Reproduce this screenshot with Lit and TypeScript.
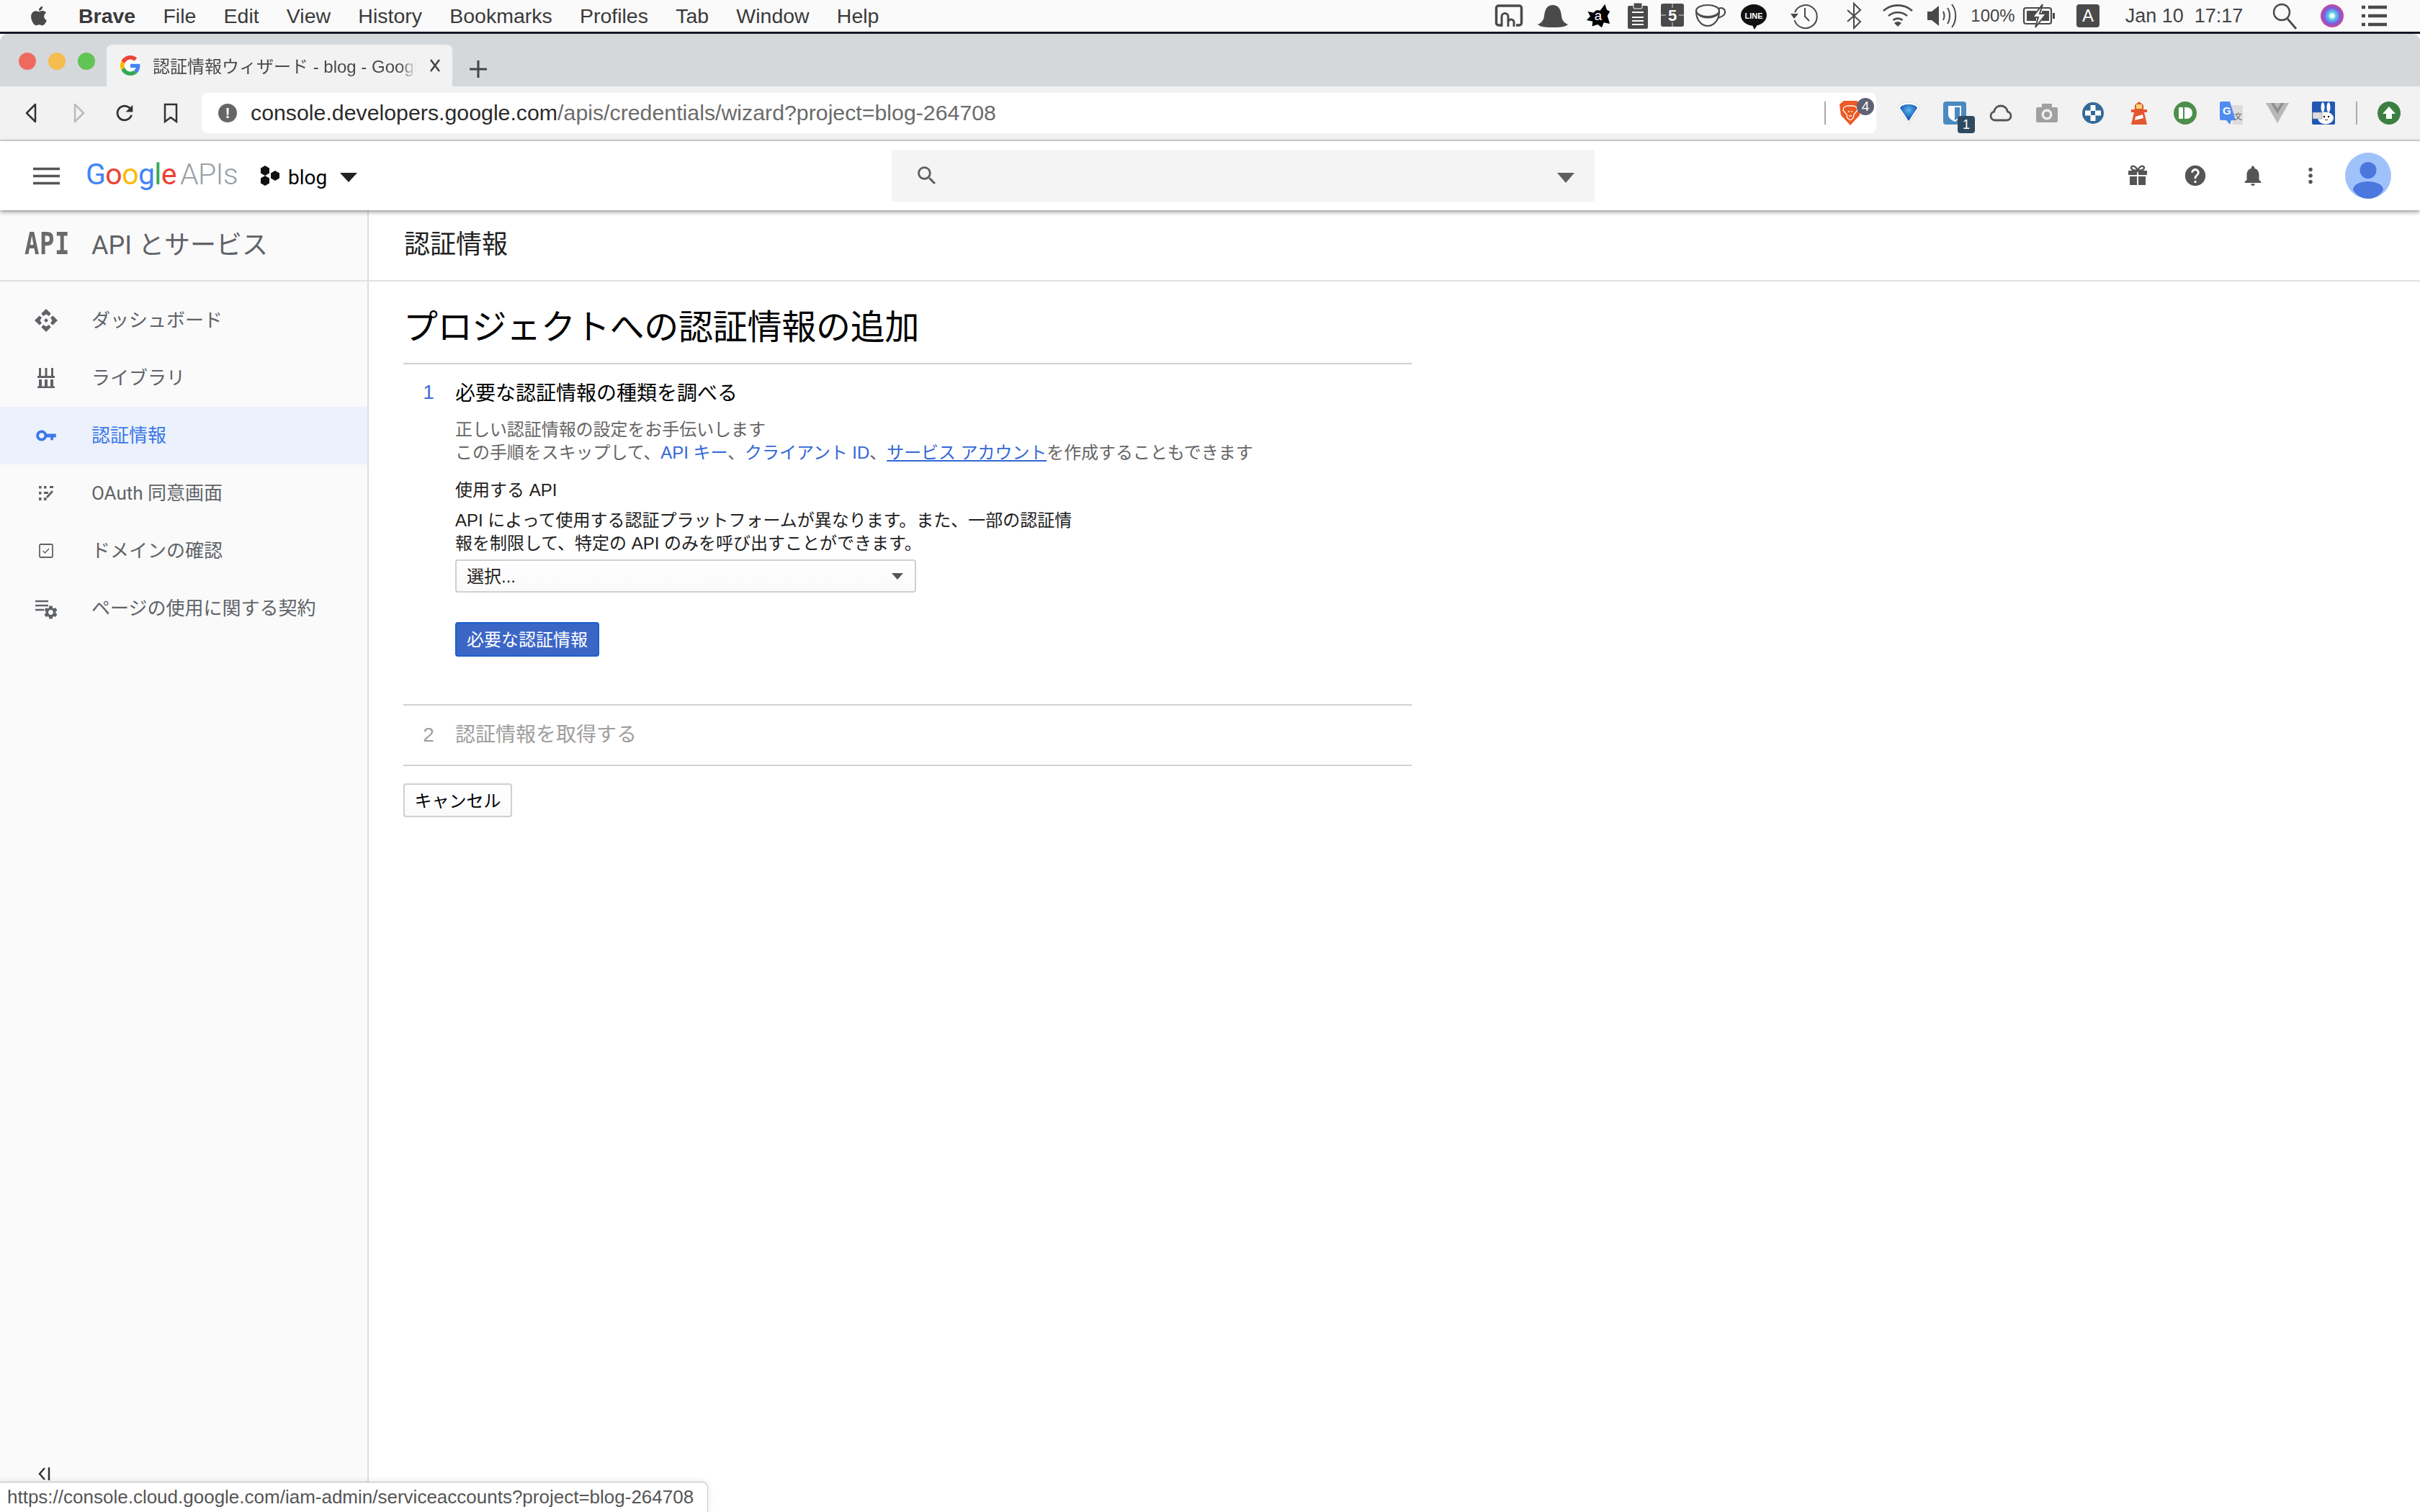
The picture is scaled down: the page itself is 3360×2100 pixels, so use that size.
import { LitElement, html, css, svg } from "lit";
import { customElement } from "lit/decorators.js";

const g = "#4a4a4a";
const ic = (size: number, vb: string, body: unknown) =>
  html`<svg width=${size} height=${size} viewBox=${vb}>${body}</svg>`;

const menuLeft = ["File", "Edit", "View", "History", "Bookmarks", "Profiles", "Tab", "Window", "Help"];

const status: { w: number; c?: unknown; t?: string; cls?: string }[] = [
  { w: 60, c: ic(40, "0 0 40 40", svg`<path d="M10 33H5.500a3 3 0 0 1-3-3V9a3 3 0 0 1 3-3h29a3 3 0 0 1 3 3v21a3 3 0 0 1-3 3H30" fill="none" stroke="${g}" stroke-width="3.500"/><path d="M10 35V21a4.500 4.500 0 0 1 9 0v14M19 29a4 4 0 0 1 8 0v6" fill="none" stroke="${g}" stroke-width="3"/>`) },
  { w: 62, c: ic(44, "0 0 44 44", svg`<path d="M1 34c4-2 8-4 9-12C11 12 15 7 22 7s11 5 12 15c1 8 5 10 9 12-4 4-13 4-21 4s-17 0-21-4z" fill="${g}"/>`) },
  { w: 64, c: ic(34, "0 0 40 40", svg`<path d="M31 1l3 9 5 3-4 7 4 13-10-2-3 8-7-5-9 3 1-8-10-2 6-6-4-8 10 2 4-4 5 2z" fill="#000"/><circle cx="20" cy="20" r="9" fill="#000"/><text x="20" y="27" font-size="22" text-anchor="middle" fill="#fff" font-family="Liberation Sans">a</text>`) },
  { w: 46, c: ic(40, "0 0 40 40", svg`<rect x="6" y="6" width="28" height="32" rx="2" fill="${g}"/><rect x="14" y="2" width="12" height="8" rx="1" fill="${g}" stroke="#fafafa" stroke-width="1"/><path d="M12 15h16M12 22h16M12 27h16M12 32h16" stroke="#fafafa" stroke-width="2"/>`) },
  { w: 50, c: ic(40, "0 0 40 40", svg`<rect x="4" y="3" width="32" height="32" rx="3" fill="${g}"/><path d="M4 19h7M29 19h7M20 3v6M20 29v6" stroke="#aaa" stroke-width="1.500"/><text x="20" y="27" font-size="22" font-weight="700" text-anchor="middle" fill="#fafafa" font-family="Liberation Sans">5</text>`) },
  { w: 56, c: ic(44, "0 0 44 44", svg`<ellipse cx="18" cy="15" rx="16" ry="8" fill="none" stroke="${g}" stroke-width="2.200"/><path d="M2 16c0 11 7 20 16 20s16-9 16-20M5 20c6 6 20 6 27 0M33 12c7-3 11 3 8 8-2 3-6 4-9 5" fill="none" stroke="${g}" stroke-width="2.200"/>`) },
  { w: 64, c: ic(40, "0 0 40 40", svg`<ellipse cx="20" cy="19" rx="18" ry="15" fill="#111"/><path d="M20 30l5 3-1 1-3 5-3-6z" fill="#111"/><text x="20" y="23.500" font-size="11" font-weight="700" text-anchor="middle" fill="#fff" font-family="Liberation Sans">LINE</text>`) },
  { w: 76, c: ic(40, "0 0 40 40", svg`<path d="M7 15a16 16 0 1 1-.5 11" fill="none" stroke="${g}" stroke-width="2"/><path d="M1 17l5 7 6-7z" fill="${g}"/><path d="M21 9v12l6 6" fill="none" stroke="${g}" stroke-width="2"/>`) },
  { w: 62, c: ic(40, "0 0 40 40", svg`<path d="M11 12l18 16-9 9V3l9 9-18 16" fill="none" stroke="${g}" stroke-width="2"/>`) },
  { w: 60, c: ic(44, "0 0 44 44", svg`<path d="M2 15a30 30 0 0 1 40 0M9 22a20 20 0 0 1 26 0M15.500 28a10 10 0 0 1 13 0" fill="none" stroke="${g}" stroke-width="2.600"/><path d="M22 37l-5-5a7 7 0 0 1 10 0z" fill="${g}"/>`) },
  { w: 62, c: ic(44, "0 0 44 44", svg`<path d="M2 16h6l10-8v28l-10-8H2z" fill="${g}"/><path d="M24 16c2 4 2 8 0 12M30 11c4 6 4 16 0 22M36 6c7 9 7 23 0 32" fill="none" stroke="${g}" stroke-width="2"/>`) },
  { w: 80, t: "100%", cls: "pct" },
  { w: 48, c: ic(48, "0 0 48 48", svg`<rect x="3" y="13" width="38" height="22" rx="3" fill="none" stroke="${g}" stroke-width="2.200"/><rect x="43" y="20" width="3" height="8" fill="${g}"/><rect x="7" y="17" width="13" height="14" fill="${g}"/><rect x="28" y="17" width="10" height="14" fill="${g}"/><path d="M29 8L15 26h8l-4 14 15-19h-9z" fill="#fafafa" stroke="${g}" stroke-width="2"/>`) },
  { w: 88, c: html`<span class="abox">A</span>` },
  { w: 179, t: "Jan 10  17:17", cls: "time" },
  { w: 100, c: ic(40, "0 0 40 40", svg`<circle cx="16" cy="15" r="11" fill="none" stroke="${g}" stroke-width="2.400"/><path d="M24 24l12 14" stroke="${g}" stroke-width="2.800"/>`) },
  { w: 32, c: html`<span class="siri"></span>` },
  { w: 84, c: ic(40, "0 0 40 40", svg`<path d="M12 8h26M12 20h26M12 32h26" stroke="${g}" stroke-width="4.500"/><path d="M3 8h5M3 20h5M3 32h5" stroke="${g}" stroke-width="4.500"/>`) },
];

const exts: unknown[] = [
  ic(32, "0 0 32 32", svg`<defs><radialGradient id="bl" cx=".5" cy=".35" r=".6"><stop offset="0" stop-color="#5fb4f2"/><stop offset="1" stop-color="#0a4aa8"/></radialGradient></defs><path d="M16 1C8 1 1 4 1 9l15 22L31 9c0-5-7-8-15-8z" fill="#fff" stroke="#ddd"/><path d="M16 4C10 4 5 6 4 9l12 18L28 9c-1-3-6-5-12-5z" fill="url(#bl)"/>`),
  html`<span class="bw">${ic(32, "0 0 32 32", svg`<path d="M7 6h18v12c0 5-5 8-9 10-4-2-9-5-9-10z" fill="#fff"/><path d="M16 8h7v10c0 3-3 6-7 8z" fill="#4a8ac0"/>`)}<span class="bwbadge">1</span></span>`,
  ic(32, "0 0 32 32", svg`<path d="M8 26h16a6 6 0 0 0 1.500-11.800C24.500 9 20.500 6 16 6s-8.500 3-9.500 8.200A6 6 0 0 0 8 26z" fill="none" stroke="#555" stroke-width="2.800"/>`),
  ic(32, "0 0 32 32", svg`<rect x="1" y="8" width="30" height="21" rx="2" fill="#a0a0a0"/><rect x="9" y="3" width="14" height="7" fill="#a0a0a0"/><circle cx="16" cy="18" r="7.500" fill="#eee"/><circle cx="16" cy="18" r="4" fill="#a0a0a0"/>`),
  ic(32, "0 0 32 32", svg`<circle cx="16" cy="16" r="15" fill="#35699a"/><path d="M12.500 5h7v7.500H27v7h-7.500V27h-7v-7.500H5v-7h7.500z" fill="#fff"/><rect x="13" y="13" width="6" height="6" fill="#35699a"/>`),
  ic(32, "0 0 32 32", svg`<path d="M16 0l6 5v6H10V5z" fill="#e3572f"/><rect x="12" y="4" width="8" height="6" fill="#f6d776"/><rect x="5" y="11" width="22" height="4" fill="#e3572f"/><path d="M9 15h14l4 17H5z" fill="#e3572f"/><path d="M21 18l1 5-12 3 1-5z" fill="#fff"/>`),
  ic(32, "0 0 32 32", svg`<circle cx="16" cy="16" r="16" fill="#4c8f4a"/><rect x="7" y="8" width="6" height="16" rx="1" fill="#fff"/><path d="M15 8h3a8 8 0 0 1 0 16h-3z" fill="#fff"/>`),
  ic(32, "0 0 32 32", svg`<path d="M16 5h14a2 2 0 0 1 2 2v23a2 2 0 0 1-2 2H18z" fill="#dcdcdc"/><path d="M0 2a2 2 0 0 1 2-2h12l8 26h-6l-2 6-5-6H2a2 2 0 0 1-2-2z" fill="#4f8bf0"/><text x="4" y="18" font-size="15" font-weight="700" fill="#fff" font-family="Liberation Sans">G</text><text x="20" y="25" font-size="11" fill="#666" font-family="Noto Sans CJK JP">文</text>`),
  ic(32, "0 0 32 32", svg`<path d="M0 2h32L16 30z" fill="#b8b8b8"/><path d="M7 2h18L16 17z" fill="#8e8e8e"/><path d="M11 2h10l-5 8z" fill="#e6e6e6" opacity=".5"/>`),
  ic(32, "0 0 32 32", svg`<rect width="32" height="32" rx="2" fill="#2257b5"/><ellipse cx="19" cy="23" rx="11" ry="8.500" fill="#fff"/><ellipse cx="15" cy="8" rx="2.500" ry="7" fill="#fff"/><ellipse cx="23" cy="8" rx="2.500" ry="7" fill="#fff"/><rect x="1" y="15" width="13" height="9" fill="#ddd" stroke="#888" stroke-width=".6"/><circle cx="17" cy="21" r="1.200"/><circle cx="23" cy="21" r="1.200"/><path d="M18 25c1 1 3 1 4 0" fill="none" stroke="#333"/>`),
];

const dashPiece = "M16 0l6.600 6.600L20 10l-4-2.500L12 10 9.400 6.600z";

const navItems: { t: string; active?: boolean; i: unknown }[] = [
  { t: "ダッシュボード", i: ic(32, "0 0 32 32", svg`<g fill="#5f6368"><path d="${dashPiece}"/><path d="${dashPiece}" transform="rotate(90 16 16)"/><path d="${dashPiece}" transform="rotate(180 16 16)"/><path d="${dashPiece}" transform="rotate(270 16 16)"/><path d="M16 13l3 3-3 3-3-3z"/></g>`) },
  { t: "ライブラリ", i: ic(28, "0 0 28 28", svg`<path d="M4 0h3v11H4zM12.500 0h3v11h-3zM21 0h3v11h-3zM2 11h24v3H2zM4 16h4v10H4zM12 16h4v10h-4zM20 16h4v10h-4zM2 25.500h24V28H2z" fill="#5f6368"/>`) },
  { t: "認証情報", active: true, i: ic(30, "0 0 24 24", svg`<path fill="#3b78e7" d="M12.650 10C11.830 7.670 9.610 6 7 6c-3.310 0-6 2.690-6 6s2.690 6 6 6c2.610 0 4.830-1.670 5.650-4H17v3h3v-3h3v-4H12.650zM7 15c-1.700 0-3-1.300-3-3s1.300-3 3-3 3 1.300 3 3-1.300 3-3 3z"/>`) },
  { t: "OAuth 同意画面", i: ic(20, "0 0 20 20", svg`<path d="M0 0h3.500v3.500H0zM7 0h3.500v3.500H7zM15 0h5v3h-5zM0 8h3.500v3.500H0zM7 8h6v3H7zM0 16h3.500v4H0zM7 16h3.500v4H7zM18 6l2 2-8 9-2-2z" fill="#5f6368"/>`) },
  { t: "ドメインの確認", i: ic(20, "0 0 20 20", svg`<rect x="1" y="1" width="18" height="18" rx="1.500" fill="none" stroke="#5f6368" stroke-width="1.800"/><path d="M5.500 10l3 3 5.500-6" fill="none" stroke="#5f6368" stroke-width="1.500"/>`) },
  { t: "ページの使用に関する契約", i: ic(30, "0 0 30 30", svg`<path d="M0 5h18M0 11h18M0 17h12" stroke="#5f6368" stroke-width="2.400"/><svg x="12" y="11" width="19" height="19" viewBox="2 2 20 20"><path fill="#5f6368" d="M19.140 12.940c.040-.300.060-.610.060-.940 0-.320-.020-.640-.070-.940l2.030-1.580c.180-.140.230-.410.120-.610l-1.920-3.320c-.120-.220-.370-.290-.590-.220l-2.390.960c-.500-.380-1.030-.700-1.620-.940l-.360-2.540c-.040-.240-.240-.410-.480-.410h-3.840c-.240 0-.430.170-.470.410l-.360 2.540c-.590.240-1.130.570-1.620.940l-2.390-.960c-.220-.080-.470 0-.590.220L2.740 8.870c-.120.210-.080.470.120.610l2.030 1.580c-.050.300-.090.630-.090.940s.020.640.070.940l-2.030 1.580c-.180.140-.230.410-.120.610l1.920 3.320c.120.220.370.290.590.220l2.390-.960c.500.380 1.030.700 1.620.940l.360 2.540c.050.240.240.410.480.410h3.840c.240 0 .440-.170.470-.410l.360-2.540c.590-.240 1.130-.560 1.620-.940l2.390.960c.220.080.470 0 .590-.220l1.920-3.320c.120-.220.070-.470-.120-.610l-2.010-1.580zM12 15.600c-1.980 0-3.600-1.620-3.600-3.600s1.620-3.600 3.600-3.600 3.600 1.620 3.600 3.600-1.620 3.600-3.600 3.600z"/></svg>`) },
];

@customElement("app-root")
export class AppRoot extends LitElement {
  static styles = css`
    :host {
      display: flex;
      flex-direction: column;
      width: 3360px;
      height: 2100px;
      overflow: hidden;
      position: relative;
      background: #fff;
      font-family: "Liberation Sans", "Noto Sans CJK JP", sans-serif;
      color: #212121;
    }
    svg { display: block; }
    .menubar {
      height: 44px;
      flex: none;
      background: #fafafa;
      display: flex;
      align-items: center;
      font-size: 28.5px;
      color: #3a3a3a;
      border-bottom: 3px solid #17172a;
      box-sizing: content-box;
    }
    .apple { margin-left: 38px; width: 32px; margin-right: 39px; }
    .menu { display: flex; gap: 38.2px; }
    .menu b { font-weight: 700; }
    .stat { margin-left: auto; display: flex; align-items: center; padding-right: 22px; }
    .slot { display: flex; justify-content: center; align-items: center; height: 44px; white-space: pre; }
    .pct { font-size: 24px; color: #444; }
    .time { font-size: 27px; color: #444; }
    .abox {
      width: 32px; height: 32px; background: #4a4a4a; color: #fafafa; border-radius: 4px;
      font-size: 24px; display: flex; align-items: center; justify-content: center;
    }
    .siri {
      width: 32px; height: 32px; border-radius: 50%;
      background: radial-gradient(circle at 50% 50%, #fff 0 10%, #5ad3e6 22%, #7a5be0 50%, #d8448f 72%, #27315e 100%);
    }
    .tabs {
      height: 73px;
      flex: none;
      background: #d5d8db;
      display: flex;
      align-items: flex-end;
      border-radius: 10px 10px 0 0;
    }
    .lights { display: flex; gap: 17px; padding: 0 0 23px 26px; width: 148px; box-sizing: border-box; align-self: flex-end; }
    .lights i { width: 24px; height: 24px; border-radius: 50%; flex: none; }
    .tab {
      width: 480px; height: 58px; background: #f2f2f2; border-radius: 8px 8px 0 0;
      display: flex; align-items: center; padding-left: 19px; box-sizing: border-box;
    }
    .tab-title {
      width: 366px; margin-left: 17px; font-size: 24px; padding-bottom: 2px; color: #4a4a4a; white-space: nowrap;
      -webkit-mask-image: linear-gradient(to right, #000 94%, transparent);
    }
    .tab-x { margin-left: 16px; }
    .plus { margin: 0 0 11px 23px; align-self: flex-end; }
    .toolbar {
      height: 74px; flex: none; background: #f2f2f2; display: flex; align-items: center;
      border-bottom: 2px solid #d5d8db; box-sizing: content-box; padding-left: 13px;
    }
    .navbtn { width: 64px; display: flex; justify-content: center; }
    .url {
      width: 2325px; height: 56px; margin-left: 11px; background: #fff; border-radius: 8px;
      display: flex; align-items: center; padding-left: 23px; box-sizing: border-box; font-size: 30.3px; color: #6b6b6b;
    }
    .url .info {
      width: 26px; height: 26px; border-radius: 50%; background: #666; color: #fff; font-size: 21px; font-weight: 700;
      display: flex; align-items: center; justify-content: center; margin-right: 19px;
    }
    .url .host { color: #2b2b2b; }
    .url .sep { margin-left: auto; width: 2px; height: 32px; background: #aaa; }
    .brave { margin: 0 21px 0 19px; display: flex; position: relative; width: 30px; height: 34px; }
    .brave em {
      position: absolute; top: -4px; right: -18px; width: 24px; height: 24px; border-radius: 50%; background: #5f6272; color: #fff;
      font-size: 19px; font-style: normal; display: flex; align-items: center; justify-content: center;
    }
    .exts { display: flex; margin-left: 13px; align-items: center; }
    .ext { width: 64px; display: flex; justify-content: center; }
    .extsep { width: 2px; height: 32px; background: #aaa; margin: 0 13px; }
    .up { width: 64px; display: flex; justify-content: center; margin-left: -1px; }
    .bw { width: 32px; height: 32px; background: #4a8ac0; border-radius: 4px; position: relative; display: block; }
    .bwbadge {
      position: absolute; right: -12px; bottom: -12px; width: 24px; height: 24px; background: #2f4a5f; color: #fff; border-radius: 4px;
      font-size: 18px; display: flex; align-items: center; justify-content: center;
    }
    .appbar {
      height: 96px; flex: none; background: #fff; display: flex; align-items: center; position: relative; z-index: 2;
      box-shadow: 0 2px 6px rgba(0, 0, 0, 0.45);
      padding-left: 46px;
    }
    .logo { margin-left: 36px; width: 211px; font-family: Roboto, sans-serif; font-size: 41px; letter-spacing: -0.6px; white-space: nowrap; margin-top: -4px; }
    .apis { color: #9aa0a6; font-weight: 300; margin-left: 5px; }
    .proj { margin-left: 30px; display: flex; }
    .pname { font-family: Roboto, sans-serif; font-size: 28px; color: #000; margin-left: 12px; margin-top: 4px; width: 72px; }
    .caret { width: 0; height: 0; border-left: 12px solid transparent; border-right: 12px solid transparent; border-top: 13px solid #222; margin-top: 5px; }
    .search {
      margin-left: 742px; width: 976px; height: 72px; background: #f4f4f4; border-radius: 4px; display: flex; align-items: center;
      padding: 0 28px 0 32px; box-sizing: border-box; justify-content: space-between;
    }
    .search .caret { border-top: 14px solid #5f5f5f; }
    .right { margin-left: 714px; display: flex; align-items: center; }
    .rbtn { width: 80px; display: flex; justify-content: center; }
    .body { flex: 1; display: flex; min-height: 0; font-family: Roboto, "Noto Sans CJK JP", sans-serif; }
    .side { width: 512px; flex: none; box-sizing: border-box; background: #fafafa; border-right: 2px solid #dedede; display: flex; flex-direction: column; }
    .side-head {
      height: 97px; flex: none; border-bottom: 2px solid #e0e0e0; display: flex; align-items: center; box-sizing: content-box; color: #5f6368;
    }
    .apiglyph {
      font-family: "DejaVu Sans Mono", monospace; font-weight: 700; font-size: 34px; width: 127px; padding-left: 34px; box-sizing: border-box;
      transform: scaleY(1.25); letter-spacing: 0.5px; color: #6a6a6a; margin-top: -6px;
    }
    .side-title { font-size: 36px; margin-top: -8px; white-space: pre; }
    nav { padding-top: 14px; }
    .item { height: 80px; display: flex; align-items: center; font-size: 26px; color: #5f6368; }
    .item .ico { width: 127px; display: flex; justify-content: center; flex: none; }
    .item .txt { padding-bottom: 5px; }
    .item.on { background: #ecf1fb; color: #3b78e7; }
    .collapse { margin-top: auto; padding: 0 0 43px 52px; }
    main { flex: 1; min-width: 0; }
    .crumb { box-sizing: content-box; height: 87px; padding: 0 0 10px 49px; border-bottom: 2px solid #e0e0e0; display: flex; align-items: center; font-size: 36px; color: #212121; }
    .wizard { width: 1400px; margin-left: 48px; font-family: "Liberation Sans", "Noto Sans CJK JP", sans-serif; }
    h1 { margin: 0; padding: 38px 0 23px; font-size: 48px; line-height: 52px; font-weight: 400; color: #000; border-bottom: 2px solid #d0d0d0; letter-spacing: -0.25px; }
    .step { display: grid; grid-template-columns: 72px 1fr; }
    .num { font-size: 28px; line-height: 40px; text-align: center; padding-right: 2px; color: #3b6fd6; }
    .step1 { padding: 19px 0 66px; border-bottom: 2px solid #d0d0d0; }
    .step-title { font-size: 28px; line-height: 40px; color: #000; }
    .step1 .step-title { padding-top: 2px; }
    .desc { margin-top: 14px; font-size: 24px; line-height: 32px; color: #666; letter-spacing: -0.06px; }
    .desc a { color: #3367d6; text-decoration: none; }
    .desc a.u { text-decoration: underline; }
    .label { margin-top: 20px; font-size: 24px; line-height: 32px; color: #212121; }
    .para { margin-top: 10px; font-size: 24px; line-height: 32px; color: #212121; width: 880px; }
    .select {
      margin-top: 6px; width: 640px; height: 46px; box-sizing: border-box; border: 2px solid #d0d0d0; border-radius: 4px;
      background: linear-gradient(#fff, #fafafa); display: flex; align-items: center; justify-content: space-between;
      padding: 0 16px 0 14px; font-size: 24px; color: #212121;
    }
    .select span { padding-bottom: 3px; }
    .select i { width: 0; height: 0; border-left: 8px solid transparent; border-right: 8px solid transparent; border-top: 9px solid #555; }
    .primary {
      margin-top: 41px; width: 200px; height: 48px; box-sizing: border-box; border: 2px solid #1f5fd0; border-radius: 4px; padding-bottom: 3px;
      background: #3b66c6; color: #fff; font-size: 24px; display: flex; align-items: center; justify-content: center;
    }
    .step2 { height: 84px; align-items: center; border-bottom: 2px solid #d0d0d0; box-sizing: border-box; }
    .step2 .num { color: #9e9e9e; }
    .step2 .step-title { color: #9e9e9e; }
    .cancel {
      margin-top: 24px; width: 151px; height: 47px; box-sizing: border-box; border: 2px solid #d0d0d0; border-radius: 4px; padding-bottom: 3px;
      background: linear-gradient(#fff, #fafafa); color: #000; font-size: 24px; display: flex; align-items: center; justify-content: center;
    }
    .bubble {
      position: absolute; left: 0; bottom: 0; height: 42px; width: 983px; box-sizing: border-box; background: #fff; z-index: 3;
      border-top: 1px solid #bbb; border-right: 1px solid #ccc; border-radius: 0 8px 0 0; padding-left: 10px;
      font-size: 26px; line-height: 40px; color: #555; white-space: nowrap; box-shadow: 0 0 8px rgba(0,0,0,.12);
    }
  `;

  render() {
    return html`
      <div class="menubar">
        <div class="apple">${ic(32, "0 0 24 24", svg`<path fill="#4a4a4a" d="M18.710 19.500c-.830 1.240-1.710 2.450-3.050 2.470-1.340.030-1.770-.790-3.290-.790-1.530 0-2 .770-3.270.820-1.310.050-2.300-1.320-3.140-2.530C4.250 17 2.940 12.450 4.700 9.390c.870-1.520 2.430-2.480 4.120-2.510 1.280-.020 2.500.870 3.290.870.780 0 2.260-1.070 3.810-.910.650.030 2.470.260 3.640 1.980-.090.060-2.170 1.280-2.150 3.810.030 3.020 2.650 4.030 2.680 4.040-.030.070-.420 1.440-1.380 2.830M13 3.500c.730-.830 1.940-1.460 2.940-1.500.130 1.170-.340 2.350-1.040 3.190-.690.850-1.830 1.510-2.950 1.420-.150-1.150.410-2.350 1.050-3.110z"/>`)}</div>
        <div class="menu"><b>Brave</b>${menuLeft.map((m) => html`<span>${m}</span>`)}</div>
        <div class="stat">
          ${status.map((s) => html`<div class="slot ${s.cls ?? ""}" style="width:${s.w}px">${s.t ?? s.c}</div>`)}
        </div>
      </div>

      <div class="tabs">
        <div class="lights">
          <i style="background:#ee6a5f"></i><i style="background:#f5bd4f"></i><i style="background:#61c454"></i>
        </div>
        <div class="tab">
          ${ic(28, "0 0 48 48", svg`<circle cx="24" cy="24" r="24" fill="#fff"/><path fill="#EA4335" d="M24 9.500c3.500 0 6.600 1.200 9.100 3.600l6.800-6.800C35.900 2.400 30.400 0 24 0 14.600 0 6.500 5.400 2.600 13.200l7.900 6.100C12.400 13.700 17.700 9.500 24 9.500z"/><path fill="#4285F4" d="M47 24.500c0-1.600-.1-3.100-.4-4.500H24v9h12.900c-.6 3-2.200 5.500-4.700 7.200l7.700 6C44.400 38 47 31.800 47 24.500z"/><path fill="#FBBC05" d="M10.500 28.700a14.500 14.500 0 0 1 0-9.400l-7.900-6.100a24 24 0 0 0 0 21.600z"/><path fill="#34A853" d="M24 48c6.500 0 11.900-2.100 15.900-5.800l-7.700-6c-2.200 1.500-4.900 2.300-8.200 2.300-6.300 0-11.600-4.200-13.500-9.900l-7.900 6.100C6.500 42.600 14.600 48 24 48z"/>`)}
          <span class="tab-title">認証情報ウィザード - blog - Googl</span>
          <span class="tab-x">${ic(20, "0 0 20 20", svg`<path d="M4 2l12 16M16 2L4 18" stroke="#444" stroke-width="2.500"/>`)}</span>
        </div>
        <div class="plus">${ic(26, "0 0 26 26", svg`<path d="M13 1v24M1 13h24" stroke="#444" stroke-width="3"/>`)}</div>
      </div>

      <div class="toolbar">
        <div class="navbtn">${ic(28, "0 0 28 28", svg`<path d="M18 2L6 14l12 12z" fill="none" stroke="#333" stroke-width="2.500" stroke-linejoin="round"/>`)}</div>
        <div class="navbtn">${ic(28, "0 0 28 28", svg`<path d="M9 2l12 12L9 26z" fill="none" stroke="#bbb" stroke-width="2.500" stroke-linejoin="round"/>`)}</div>
        <div class="navbtn">${ic(34, "0 0 24 24", svg`<path fill="#333" d="M17.650 6.350C16.200 4.900 14.210 4 12 4c-4.420 0-7.990 3.580-7.990 8s3.570 8 7.990 8c3.730 0 6.840-2.550 7.730-6h-2.080c-.820 2.330-3.040 4-5.650 4-3.310 0-6-2.690-6-6s2.690-6 6-6c1.660 0 3.140.690 4.220 1.780L13 11h7V4l-2.350 2.350z"/>`)}</div>
        <div class="navbtn">${ic(28, "0 0 28 28", svg`<path d="M6 2h16v24l-8-6-8 6z" fill="none" stroke="#333" stroke-width="2.500"/>`)}</div>
        <div class="url">
          <span class="info">!</span>
          <span><span class="host">console.developers.google.com</span>/apis/credentials/wizard?project=blog-264708</span>
          <span class="sep"></span>
          <span class="brave">
            <svg width="30" height="34" viewBox="0 0 30 34"><path d="M6 0h18l6 5-2 15-13 14L2 20 0 5z" fill="#ee5a24"/><path d="M6 9l5-2h8l5 2 1 4-5 6-1 5-4 3-4-3-1-5-5-6z" fill="none" stroke="#fff" stroke-width="1.300"/><path d="M12 15h2M16 15h2M13 21h4" stroke="#fff" stroke-width="1.300"/></svg>
            <em>4</em>
          </span>
        </div>
        <div class="exts">
          ${exts.map((e) => html`<div class="ext">${e}</div>`)}
          <span class="extsep"></span>
          <div class="up">${ic(32, "0 0 32 32", svg`<circle cx="16" cy="16" r="16" fill="#3c7f42"/><path d="M16 7l9 10h-5v7h-8v-7H7z" fill="#fff"/>`)}</div>
        </div>
      </div>

      <div class="appbar">
        ${ic(37, "0 0 37 24", svg`<path d="M0 2h37M0 12h37M0 22h37" stroke="#555" stroke-width="3.600"/>`)}
        <div class="logo"><span style="color:#4285f4">G</span><span style="color:#ea4335">o</span><span style="color:#fbbc05">o</span><span style="color:#4285f4">g</span><span style="color:#34a853">l</span><span style="color:#ea4335">e</span><span class="apis">APIs</span></div>
        <div class="proj">${ic(28, "0 0 28 28", svg`<path d="M8 0l6 3.500v7L8 14l-6-3.500v-7zM22 7l6 3.500v7L22 21l-6-3.500v-7zM8 14l6 3.500v7L8 28l-6-3.500v-7z" fill="#111"/>`)}</div>
        <div class="pname">blog</div>
        <div class="caret"></div>
        <div class="search">
          ${ic(34, "0 0 24 24", svg`<path fill="#5f5f5f" d="M15.500 14h-.790l-.280-.270C15.410 12.590 16 11.110 16 9.500 16 5.910 13.090 3 9.500 3S3 5.910 3 9.500 5.910 16 9.500 16c1.610 0 3.090-.590 4.230-1.570l.270.280v.790l5 4.990L20.490 19l-4.990-5zm-6 0C7.010 14 5 11.990 5 9.500S7.010 5 9.500 5 14 7.010 14 9.500 11.990 14 9.500 14z"/>`)}
          <div class="caret"></div>
        </div>
        <div class="right">
          <div class="rbtn">${ic(34, "0 0 34 34", svg`<path fill="#555" d="M4 10h12v6H4zM18 10h12v6H18zM6 18h10v12H6zM18 18h10v12H18z"/><path d="M17 10c-3-8-9-7-9-4s5 4 9 4c4 0 9-1 9-4s-6-4-9 4z" fill="none" stroke="#555" stroke-width="2.500"/>`)}</div>
          <div class="rbtn">${ic(34, "0 0 24 24", svg`<path fill="#555" d="M12 2C6.480 2 2 6.480 2 12s4.480 10 10 10 10-4.480 10-10S17.520 2 12 2zm1 17h-2v-2h2v2zm2.070-7.750l-.900.920C13.450 12.900 13 13.500 13 15h-2v-.500c0-1.100.450-2.100 1.170-2.830l1.240-1.260c.370-.360.590-.860.590-1.410 0-1.100-.900-2-2-2s-2 .900-2 2H8c0-2.210 1.790-4 4-4s4 1.790 4 4c0 .880-.360 1.680-.930 2.250z"/>`)}</div>
          <div class="rbtn">${ic(34, "0 0 24 24", svg`<path fill="#555" d="M12 22c1.100 0 2-.900 2-2h-4c0 1.100.890 2 2 2zm6-6v-5c0-3.070-1.640-5.640-4.500-6.320V4c0-.830-.670-1.500-1.500-1.500s-1.500.670-1.500 1.500v.680C7.630 5.360 6 7.920 6 11v5l-2 2v1h16v-1l-2-2z"/>`)}</div>
          <div class="rbtn">${ic(34, "0 0 24 24", svg`<path fill="#555" d="M12 8c1.100 0 2-.900 2-2s-.900-2-2-2-2 .900-2 2 .900 2 2 2zm0 2c-1.100 0-2 .900-2 2s.900 2 2 2 2-.900 2-2-.900-2-2-2zm0 6c-1.100 0-2 .900-2 2s.900 2 2 2 2-.900 2-2-.900-2-2-2z"/>`)}</div>
          <div class="rbtn">${ic(64, "0 0 64 64", svg`<circle cx="32" cy="32" r="32" fill="#a0c2fa"/><circle cx="32" cy="24.500" r="11.500" fill="#4a78de"/><path d="M11 52c0-8 10-12 21-12s21 4 21 12c-5 8-13 12-21 12s-16-4-21-12z" fill="#4a78de"/>`)}</div>
        </div>
      </div>

      <div class="body">
        <aside class="side">
          <div class="side-head">
            <span class="apiglyph">API</span>
            <span class="side-title">API とサービス</span>
          </div>
          <nav>
            ${navItems.map((n) => html`<div class="item ${n.active ? "on" : ""}"><span class="ico">${n.i}</span><span class="txt">${n.t}</span></div>`)}
          </nav>
          <div class="collapse">${ic(20, "0 0 20 20", svg`<path d="M10 2L3 10l7 8M16 1v18" fill="none" stroke="#333" stroke-width="2.500"/>`)}</div>
        </aside>
        <main>
          <div class="crumb">認証情報</div>
          <div class="wizard">
            <h1>プロジェクトへの認証情報の追加</h1>
            <section class="step step1">
              <div class="num">1</div>
              <div>
                <div class="step-title">必要な認証情報の種類を調べる</div>
                <div class="desc">正しい認証情報の設定をお手伝いします<br />この手順をスキップして、<a>API キー</a>、<a>クライアント ID</a>、<a class="u">サービス アカウント</a>を作成することもできます</div>
                <div class="label">使用する API</div>
                <div class="para">API によって使用する認証プラットフォームが異なります。また、一部の認証情報を制限して、特定の API のみを呼び出すことができます。</div>
                <div class="select"><span>選択...</span><i></i></div>
                <div class="primary">必要な認証情報</div>
              </div>
            </section>
            <section class="step step2">
              <div class="num">2</div>
              <div class="step-title">認証情報を取得する</div>
            </section>
            <div class="cancel">キャンセル</div>
          </div>
        </main>
      </div>
      <div class="bubble">https://console.cloud.google.com/iam-admin/serviceaccounts?project=blog-264708</div>
    `;
  }
}
